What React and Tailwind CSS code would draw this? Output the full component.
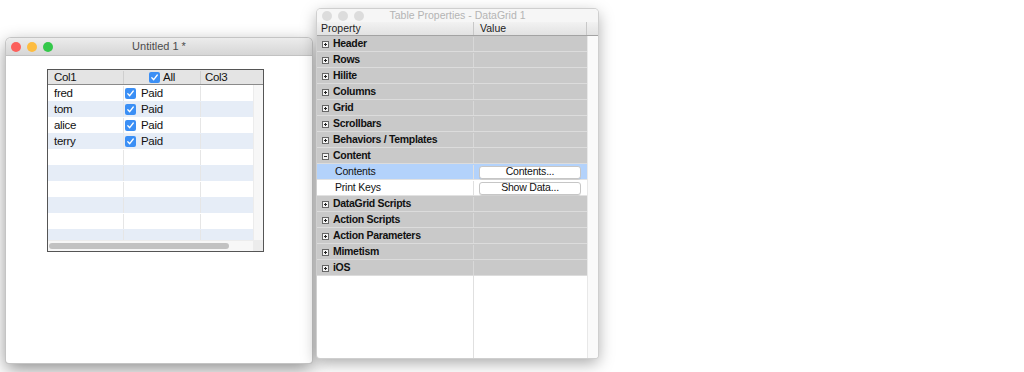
import React from 'react';

const font = { fontFamily: '"Liberation Sans", Arial, sans-serif' };

function Check() {
  return (
    <span className="inline-flex h-[11px] w-[11px] shrink-0 items-center justify-center rounded-[2px] bg-[#3b8ff5]">
      <svg width="9" height="9" viewBox="0 0 9 9">
        <path d="M1.8 4.8 L3.7 6.7 L7.3 2" fill="none" stroke="#fff" strokeWidth="1.3" strokeLinecap="round" strokeLinejoin="round" />
      </svg>
    </span>
  );
}

function Expander({ open }) {
  return (
    <svg width="7" height="7" viewBox="0 0 7 7" className="shrink-0">
      <rect x="0.5" y="0.5" width="6" height="6" fill="#f4f4f4" stroke="#666" />
      <path d="M2 3.5 H5" stroke="#222" />
      {!open && <path d="M3.5 2 V5" stroke="#222" />}
    </svg>
  );
}

function Lights({ active }) {
  const c = active ? ['bg-[#fc605c]', 'bg-[#fdbc40]', 'bg-[#34c84a]'] : ['bg-[#dcdcdc]', 'bg-[#dcdcdc]', 'bg-[#dcdcdc]'];
  return (
    <div className="flex items-center gap-[6px]">
      {c.map((cls, i) => (
        <span key={i} className={`h-[10px] w-[10px] rounded-full ${cls}`} />
      ))}
    </div>
  );
}

const people = ['fred', 'tom', 'alice', 'terry'];

function GridRow({ i, name }) {
  const stripe = i % 2 === 1 ? 'bg-[#e6edf7]' : 'bg-white';
  return (
    <div className={`flex h-[16px] shrink-0 pt-[1px] ${stripe} text-[11.5px] tracking-[-0.3px] text-[#111]`}>
      <div className="flex w-[76px] items-center border-r border-[#e6e6e6] pl-[6px]">{name}</div>
      <div className="flex w-[77px] items-center gap-[5px] border-r border-[#e6e6e6] pl-[1px]">
        {name && <Check />}
        {name && <span>Paid</span>}
      </div>
      <div className="flex-1" />
    </div>
  );
}

function DataGrid() {
  const rows = Array.from({ length: 10 }, (_, i) => people[i] || '');
  return (
    <div className="ml-[41px] mt-[13px] flex h-[183px] w-[217px] flex-col border border-[#555] bg-white">
      <div className="flex h-[15px] shrink-0 border-b border-[#8a8a8a] bg-[#e4e4e4] pt-[1px] text-[11.5px] tracking-[-0.3px] text-[#111]">
        <div className="flex w-[76px] items-center border-r border-[#cfcfcf] pl-[6px]">Col1</div>
        <div className="flex w-[77px] items-center justify-center gap-[3px] border-r border-[#cfcfcf]">
          <Check />
          <span>All</span>
        </div>
        <div className="flex flex-1 items-center pl-[4px]">Col3</div>
      </div>
      <div className="flex min-h-0 flex-1">
        <div className="flex min-w-0 flex-1 flex-col overflow-hidden">
          {rows.map((n, i) => (
            <GridRow key={i} i={i} name={n} />
          ))}
        </div>
        <div className="w-[10px] shrink-0 border-l border-[#ececec] bg-[#f7f7f7]" />
      </div>
      <div className="flex h-[11px] shrink-0 border-t border-[#ececec] bg-[#f7f7f7]">
        <div className="flex flex-1 items-center pl-[1px]">
          <div className="h-[6px] w-[180px] rounded-full bg-[#c2c2c2]" />
        </div>
        <div className="w-[10px] bg-[#ececec]" />
      </div>
    </div>
  );
}

const props = [
  { label: 'Header' },
  { label: 'Rows' },
  { label: 'Hilite' },
  { label: 'Columns' },
  { label: 'Grid' },
  { label: 'Scrollbars' },
  { label: 'Behaviors / Templates' },
  { label: 'Content', open: true },
  { label: 'Contents', child: true, button: 'Contents...', selected: true },
  { label: 'Print Keys', child: true, button: 'Show Data...' },
  { label: 'DataGrid Scripts' },
  { label: 'Action Scripts' },
  { label: 'Action Parameters' },
  { label: 'Mimetism' },
  { label: 'iOS' },
];

function PropRow({ p }) {
  const bg = p.selected ? 'bg-[#b3d2fb]' : p.child ? 'bg-white' : 'bg-[#c9c9c9]';
  const sep = p.child ? 'border-[#e2e2e2]' : 'border-[#dcdcdc]';
  return (
    <div className={`flex h-[16px] shrink-0 border-b pt-[1px] ${sep} ${bg} text-[10.5px] text-[#111]`}>
      <div className={`flex w-[157px] items-center border-r ${p.child ? 'border-[#e0e0e0]' : 'border-[#d8d8d8]'} ${p.child ? 'pl-[18px]' : 'pl-[5px]'}`}>
        {!p.child && <Expander open={p.open} />}
        <span className={p.child ? 'tracking-[-0.2px]' : 'ml-[4px] font-bold tracking-[-0.3px]'}>{p.label}</span>
      </div>
      <div className="flex flex-1 items-center pl-[5px] pr-[4px]">
        {p.button && (
          <div className="flex h-[13px] w-[102px] items-center justify-center rounded-[3px] border border-[#c6c6c6] bg-white text-[10.5px] tracking-[-0.2px] shadow-[0_1px_0_rgba(0,0,0,0.08)]">
            {p.button}
          </div>
        )}
      </div>
    </div>
  );
}

export default function App() {
  return (
    <div className="relative h-[372px] w-[1024px] overflow-hidden bg-white" style={font}>
      {/* Untitled 1 window */}
      <div className="absolute left-[6px] top-[38px] flex h-[325px] w-[306px] flex-col overflow-hidden rounded-t-[5px] rounded-b-[3px] bg-white shadow-[0_6px_18px_rgba(0,0,0,0.45)] ring-1 ring-[#c4c4c4]">
        <div className="relative flex h-[18px] shrink-0 items-center border-b border-[#c2c2c2] bg-gradient-to-b from-[#ececec] to-[#d6d6d6] pl-[5px]">
          <Lights active />
          <div className="absolute inset-0 flex items-center justify-center text-[11px] text-[#4c4c4c]">Untitled 1 *</div>
        </div>
        <div className="flex-1">
          <DataGrid />
        </div>
      </div>

      {/* Table Properties window */}
      <div className="absolute left-[317px] top-[9px] flex h-[349px] w-[281px] flex-col overflow-hidden rounded-t-[4px] rounded-b-[3px] bg-white shadow-[0_5px_16px_rgba(0,0,0,0.35)] ring-1 ring-[#cfcfcf]">
        <div className="relative flex h-[13px] shrink-0 items-center bg-[#f6f6f6] pl-[5px]">
          <Lights />
          <div className="absolute inset-0 flex items-center justify-center text-[10.5px] text-[#b4b4b4]">Table Properties - DataGrid 1</div>
        </div>
        <div className="flex h-[14px] shrink-0 border-b border-[#a3a3a3] bg-gradient-to-b from-[#f2f2f2] to-[#e2e2e2] text-[10.5px] text-[#222]">
          <div className="flex w-[157px] items-center border-r border-[#c8c8c8] pl-[4px]">Property</div>
          <div className="flex w-[113px] items-center border-r border-[#c8c8c8] pl-[6px]">Value</div>
          <div className="flex-1" />
        </div>
        <div className="flex min-h-0 flex-1">
          <div className="flex w-[270px] flex-col">
            {props.map((p) => (
              <PropRow key={p.label} p={p} />
            ))}
            <div className="flex flex-1">
              <div className="w-[157px] border-r border-[#e0e0e0]" />
              <div className="flex-1" />
            </div>
          </div>
          <div className="flex-1 border-l border-[#e8e8e8] bg-[#fafafa]" />
        </div>
      </div>
    </div>
  );
}
